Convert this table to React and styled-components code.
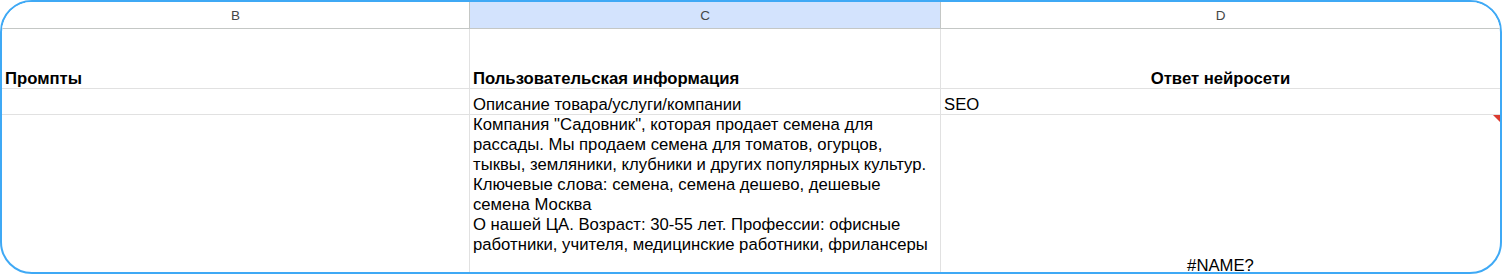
import React from "react";
import styled, { createGlobalStyle } from "styled-components";

const Global = createGlobalStyle`
  html, body { margin: 0; padding: 0; background: #fff; }
  body { font-family: "Liberation Sans", Arial, sans-serif; }
`;

const Frame = styled.div`
  box-sizing: border-box;
  width: 1502px;
  height: 274px;
  border: 2px solid #3fa9f5;
  border-radius: 32px;
  overflow: hidden;
  background: #fff;
`;

const Grid = styled.div`
  display: grid;
  grid-template-columns: 468px 471px 559px;
  grid-template-rows: 27px 60px 26px 161px;
`;

const HeadCell = styled.div`
  box-sizing: border-box;
  display: flex;
  align-items: center;
  justify-content: center;
  border-bottom: 1px solid #c4c7c5;
  border-right: ${(p) => (p.$last ? "none" : "1px solid #c4c7c5")};
  background: ${(p) => (p.$selected ? "#d3e3fd" : "#fff")};
  color: #444746;
  font-size: 13.5px;
  padding-top: 1px;
`;

const Cell = styled.div`
  position: relative;
  box-sizing: border-box;
  display: flex;
  flex-direction: column;
  justify-content: ${(p) => (p.$valign === "top" ? "flex-start" : "flex-end")};
  align-items: ${(p) => (p.$center ? "center" : "flex-start")};
  border-bottom: 1px solid #e1e1e1;
  border-right: ${(p) => (p.$last ? "none" : "1px solid #e1e1e1")};
  padding: 0 3px;
  font-size: 16.7px;
  line-height: ${(p) => (p.$valign === "top" ? "20px" : "18px")};
  font-weight: ${(p) => (p.$bold ? 700 : 400)};
  color: #000;
  white-space: pre-wrap;
`;

const ErrorMark = styled.span`
  position: absolute;
  top: 0;
  right: 0;
  width: 0;
  height: 0;
  border-top: 7px solid #db3a2f;
  border-left: 7px solid transparent;
`;

const cText =
  'Компания "Садовник", которая продает семена для\nрассады. Мы продаем семена для томатов, огурцов,\nтыквы, земляники, клубники и других популярных культур.\nКлючевые слова: семена, семена дешево, дешевые\nсемена Москва\nО нашей ЦА. Возраст: 30-55 лет. Профессии: офисные\nработники, учителя, медицинские работники, фрилансеры';

export default function App() {
  return (
    <>
      <Global />
      <Frame>
        <Grid>
          <HeadCell>B</HeadCell>
          <HeadCell $selected>C</HeadCell>
          <HeadCell $last>D</HeadCell>

          <Cell $bold>Промпты</Cell>
          <Cell $bold>Пользовательская информация</Cell>
          <Cell $bold $center $last>Ответ нейросети</Cell>

          <Cell />
          <Cell>Описание товара/услуги/компании</Cell>
          <Cell $last>SEO</Cell>

          <Cell />
          <Cell $valign="top">{cText}</Cell>
          <Cell $center $last>
            <ErrorMark />
            #NAME?
          </Cell>
        </Grid>
      </Frame>
    </>
  );
}
